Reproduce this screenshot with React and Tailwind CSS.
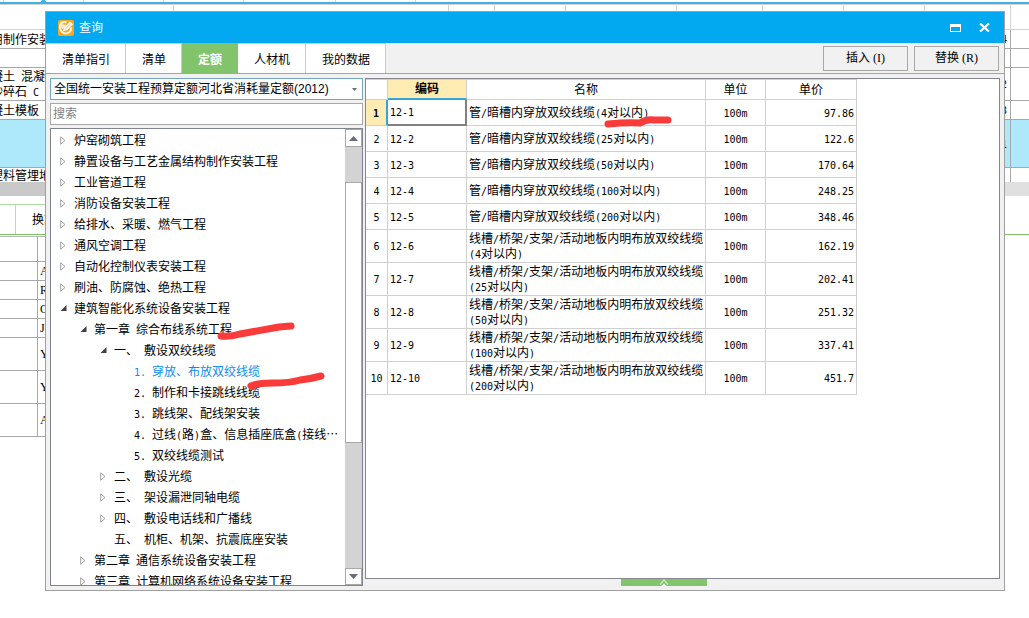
import { useState } from 'react'

const tabs = ['清单指引', '清单', '定额', '人材机', '我的数据']

const tree = [
  { level: 0, label: '炉窑砌筑工程' },
  { level: 0, label: '静置设备与工艺金属结构制作安装工程' },
  { level: 0, label: '工业管道工程' },
  { level: 0, label: '消防设备安装工程' },
  { level: 0, label: '给排水、采暖、燃气工程' },
  { level: 0, label: '通风空调工程' },
  { level: 0, label: '自动化控制仪表安装工程' },
  { level: 0, label: '刷油、防腐蚀、绝热工程' },
  { level: 0, label: '建筑智能化系统设备安装工程', open: true },
  { level: 1, prefix: '第一章', label: '综合布线系统工程', open: true },
  { level: 2, prefix: '一、', label: '敷设双绞线缆', open: true },
  { level: 3, prefix: '1.', label: '穿放、布放双绞线缆', leaf: true },
  { level: 3, prefix: '2.', label: '制作和卡接跳线线缆', leaf: true },
  { level: 3, prefix: '3.', label: '跳线架、配线架安装', leaf: true },
  { level: 3, prefix: '4.', label: '过线(路)盒、信息插座底盒(接线⋯', leaf: true },
  { level: 3, prefix: '5.', label: '双绞线缆测试', leaf: true },
  { level: 2, prefix: '二、', label: '敷设光缆' },
  { level: 2, prefix: '三、', label: '架设漏泄同轴电缆' },
  { level: 2, prefix: '四、', label: '敷设电话线和广播线' },
  { level: 2, prefix: '五、', label: '机柜、机架、抗震底座安装', leaf: true },
  { level: 1, prefix: '第二章', label: '通信系统设备安装工程' },
  { level: 1, prefix: '第三章', label: '计算机网络系统设备安装工程' },
]

const indents = ['pl-[9px]', 'pl-[29px]', 'pl-[49px]', 'pl-[69px]']

const pipe = '管/暗槽内穿放双绞线缆'
const tray = '线槽/桥架/支架/活动地板内明布放双绞线缆'

const quotas = [
  { code: '12-1', name: pipe, size: '(4对以内)', unit: '100m', price: '97.86' },
  { code: '12-2', name: pipe, size: '(25对以内)', unit: '100m', price: '122.6' },
  { code: '12-3', name: pipe, size: '(50对以内)', unit: '100m', price: '170.64' },
  { code: '12-4', name: pipe, size: '(100对以内)', unit: '100m', price: '248.25' },
  { code: '12-5', name: pipe, size: '(200对以内)', unit: '100m', price: '348.46' },
  { code: '12-6', name: tray, size: '(4对以内)', unit: '100m', price: '162.19', wrap: true },
  { code: '12-7', name: tray, size: '(25对以内)', unit: '100m', price: '202.41', wrap: true },
  { code: '12-8', name: tray, size: '(50对以内)', unit: '100m', price: '251.32', wrap: true },
  { code: '12-9', name: tray, size: '(100对以内)', unit: '100m', price: '337.41', wrap: true },
  { code: '12-10', name: tray, size: '(200对以内)', unit: '100m', price: '451.7', wrap: true },
]

const sheetRows = [
  { height: 'h-[19px]', lines: ['用制作安装'], value: '4' },
  { height: 'h-[19px]', lines: [], value: '' },
  { height: 'h-[33px]', lines: ['凝土 混凝', '砂碎石 C'], value: '2' },
  { height: 'h-[19px]', lines: ['凝土模板'], value: '3' },
  { height: 'h-[48px]', lines: [], value: '1', selected: true },
  { height: 'h-[14px]', lines: ['塑料管埋地'], value: '', last: true },
]

const detailRows = [
  { height: 'h-[25px]', type: '' },
  { height: 'h-[19px]', type: 'A' },
  { height: 'h-[19px]', type: 'R' },
  { height: 'h-[19px]', type: 'C' },
  { height: 'h-[19px]', type: 'J' },
  { height: 'h-[33px]', type: 'Y' },
  { height: 'h-[33px]', type: 'Y' },
  { height: 'h-[33px]', type: 'A' },
]

const headColumns = ['w-[174px]', 'w-[275px]', 'w-[46px]', 'w-[71px]', 'w-[111px]', 'w-[86px]', 'w-[81px]', 'w-[81px]', 'w-[86px]']
const stripColumns = ['w-1', 'w-20', 'w-20', 'w-20', 'w-[92px]', 'w-20']

const mono = "font-['DejaVu_Sans_Mono',monospace] text-[10px]"

// Latin runs take half the width of a Chinese character
function Mixed({ text }) {
  return text.split(/([\x20-\x7e]+)/).map((part, i) =>
    i % 2 ? (
      <span key={i} className={mono}>{part}</span>
    ) : (
      part
    )
  )
}

function Sheet() {
  return (
    <div className="overflow-hidden">
      <div className="relative flex h-1 border-b-2 border-[#41b1e1]">
        {stripColumns.map((width, i) => (
          <div key={i} className={`${width} shrink-0 border-r border-[#d3d3d3]`} />
        ))}
        <svg className="absolute left-10 top-0" width="7" height="3" viewBox="0 0 7 3">
          <path d="M0 3 L2 0 H5 L7 3 Z" fill="#41b1e1" />
        </svg>
      </div>
      <div className="flex h-[26px] border-y border-[#d3d3d3]">
        {headColumns.map((width, i) => (
          <div key={i} className={`${width} shrink-0 border-r border-[#d3d3d3]`} />
        ))}
      </div>
      {sheetRows.map((row, i) => (
        <div
          key={i}
          className={`${row.height} flex overflow-hidden ${row.last ? '' : 'border-b border-[#a8a8a8]'} ${row.selected ? 'bg-[#aee9fb]' : ''}`}
        >
          <div className="flex w-[1011px] shrink-0 items-center justify-between border-r border-[#a8a8a8] pr-[3px] pt-0.5">
            <div className="-ml-[9px] leading-[14px]">
              {row.lines.map((line) => (
                <p key={line}>
                  <Mixed text={line} />
                </p>
              ))}
            </div>
            <span className={mono}>{row.value}</span>
          </div>
        </div>
      ))}
      <div className="flex h-[14px] bg-[#c9c9c9]">
        <div className="ml-auto w-[100px] bg-[#e0e0e0]" />
      </div>
    </div>
  )
}

function Details() {
  return (
    <div className="mt-2">
      <div className="flex h-[31px] border-b border-[#7dc465]">
        <div className="w-4 border-r border-t border-[#b0e29e]" />
        <div className="flex w-[100px] items-center border-t border-[#b0e29e] pl-4">换算信息</div>
      </div>
      <div className="mt-px w-[500px] border-t border-[#b8b8b8]">
        {detailRows.map((row, i) => (
          <div key={i} className={`${row.height} flex border-b border-[#a8a8a8]`}>
            <div className="w-[38px] border-r border-[#a8a8a8]" />
            <span className="self-center pl-0.5 font-['Liberation_Serif',serif] leading-none">{row.type}</span>
          </div>
        ))}
      </div>
    </div>
  )
}

function TitleBar() {
  return (
    <header className="flex h-[31px] shrink-0 items-center bg-[#02a9f1] pl-3 pr-3.5 text-white">
      <svg width="16" height="16" viewBox="0 0 16 16">
        <rect width="16" height="16" rx="2" fill="#f9a61f" />
        <path d="M8.500 2.300 Q4 1 2.200 4.500 Q1 9 4 12 Q8 15 11.500 12 Q13.500 10 12.800 7.500" fill="none" stroke="#fff6e6" strokeWidth="2" />
        <path d="M2.500 4 L8.500 5 L5 9 Q3 9 2.500 4 Z" fill="#ffeccb" />
        <path d="M5 11.200 L6 7.500 L12 1.500 L15 4.200 L9 10.200 Z" fill="#fff" />
        <path d="M6.800 9.500 L12.500 3.800" stroke="#f6a936" strokeWidth="0.800" />
      </svg>
      <h1 className="ml-[5px]">查询</h1>
      <button type="button" aria-label="最大化" className="ml-auto">
        <svg width="11" height="8" viewBox="0 0 11 8">
          <path d="M0 0 H11 V8 H0 Z M1 3 V7 H10 V3 Z" fill="#fff" fillRule="evenodd" />
        </svg>
      </button>
      <button type="button" aria-label="关闭" className="ml-[18px]">
        <svg width="11" height="9" viewBox="0 0 11 9">
          <path d="M1 0.500 L10 8.500 M10 0.500 L1 8.500" stroke="#fff" strokeWidth="2.200" />
        </svg>
      </button>
    </header>
  )
}

function TreeArrow({ open, leaf }) {
  if (leaf) return <span className="w-2 shrink-0" />
  return (
    <svg className="shrink-0" width="8" height="9" viewBox="0 0 8 9">
      {open ? (
        <path d="M6.500 1 V7 H0.500 Z" fill="#404040" />
      ) : (
        <path d="M0.700 0.800 L5 4.500 L0.700 8.200 Z" fill="#fff" stroke="#a0a0a0" />
      )}
    </svg>
  )
}

function Tree({ selected, onSelect }) {
  return (
    <div className="flex min-h-0 flex-1 border border-[#7f848f] bg-white">
      <ul className="min-w-0 flex-1 overflow-hidden pt-px">
        {tree.map((node) => (
          <li key={node.label} className={indents[node.level]}>
            <button
              type="button"
              onClick={() => onSelect(node.label)}
              className={`flex h-[21px] items-center whitespace-nowrap ${node.label === selected ? 'text-[#0a8cf5]' : ''}`}
            >
              <TreeArrow open={node.open} leaf={node.leaf} />
              <span className="ml-1.5 flex items-center gap-1.5">
                {node.prefix && (
                  <span>
                    <Mixed text={node.prefix} />
                  </span>
                )}
                <span>
                  <Mixed text={node.label} />
                </span>
              </span>
            </button>
          </li>
        ))}
      </ul>
      <div className="flex w-[17px] shrink-0 flex-col bg-[#d3d3d3]">
        <button type="button" aria-label="向上滚动" className="flex h-[18px] items-center justify-center border border-[#a8a8a8] bg-white">
          <svg width="9" height="5" viewBox="0 0 9 5">
            <path d="M0 5 L4.500 0 L9 5 Z" fill="#686c7c" />
          </svg>
        </button>
        <div className="flex flex-1 flex-col">
          <div className="h-[35px]" />
          <div className="h-[62%] border border-[#a8a8a8] bg-white" />
        </div>
        <button type="button" aria-label="向下滚动" className="flex h-[17px] items-center justify-center border border-[#a8a8a8] bg-white">
          <svg width="9" height="5" viewBox="0 0 9 5">
            <path d="M0 0 L4.500 5 L9 0 Z" fill="#686c7c" />
          </svg>
        </button>
      </div>
    </div>
  )
}

function QuotaTable() {
  const cell = 'border-b border-r border-[#d0d0d0] p-0'

  return (
    <table className="w-[491px] table-fixed border-separate border-spacing-0 leading-[14px]">
      <colgroup>
        <col className="w-[22px]" />
        <col className="w-[79px]" />
        <col className="w-[239px]" />
        <col className="w-[60px]" />
        <col className="w-[91px]" />
      </colgroup>
      <thead>
        <tr className="h-[21px]">
          <th className={`${cell} border-t`} aria-label="序号" />
          <th className="border-b-2 border-r border-t border-[#d0d0d0] border-b-[#36a5d3] bg-[#ffecb3] p-0 font-bold">编码</th>
          <th className={`${cell} border-t font-normal`}>名称</th>
          <th className={`${cell} border-t font-normal`}>单位</th>
          <th className={`${cell} border-t font-normal`}>单价</th>
        </tr>
      </thead>
      <tbody>
        {quotas.map((row, i) => (
          <tr key={row.code} className={row.wrap ? 'h-[33px]' : 'h-[26px]'}>
            {i === 0 ? (
              <td className={`${mono} border-b border-r-2 border-[#d0d0d0] border-r-[#36a5d3] bg-[#ffecb3] pt-0.5 text-center font-bold`}>1</td>
            ) : (
              <td className={`${mono} border-b border-r border-[#d0d0d0] pt-0.5 text-center`}>{i + 1}</td>
            )}
            <td className={`${mono} pl-0.5 pt-0.5 ${i === 0 ? 'border-b-2 border-r-2 border-[#808080]' : 'border-b border-r border-[#d0d0d0]'}`}>
              {row.code}
            </td>
            <td className="whitespace-nowrap border-b border-r border-[#d0d0d0] pl-0.5 pt-0.5">
              <Mixed text={row.name} />
              {row.wrap && <br />}
              <Mixed text={row.size} />
            </td>
            <td className={`${mono} border-b border-r border-[#d0d0d0] pt-0.5 text-center`}>{row.unit}</td>
            <td className={`${mono} border-b border-r border-[#d0d0d0] pr-0.5 pt-0.5 text-right`}>{row.price}</td>
          </tr>
        ))}
      </tbody>
    </table>
  )
}

function QueryWindow() {
  const [tab, setTab] = useState('定额')
  const [node, setNode] = useState('穿放、布放双绞线缆')

  return (
    <section className="absolute bottom-[27px] left-[45px] right-6 top-[11px] flex flex-col border border-[#a0a0a0] bg-[#f1f1f1]">
      <TitleBar />
      <div className="flex h-[31px] shrink-0 items-center border-b border-[#7dc465] pr-[5px]">
        <nav className="flex h-full">
          {tabs.map((name) => (
            <button
              key={name}
              type="button"
              onClick={() => setTab(name)}
              className={`border-r border-t pl-4 pr-[15px] pt-0.5 ${
                name === tab ? 'border-[#82c46c] bg-[#82c46c] font-bold text-white' : 'border-[#b0e29e] bg-white'
              }`}
            >
              {name}
            </button>
          ))}
        </nav>
        <div className="ml-auto flex gap-1.5 font-['Liberation_Serif','Noto_Sans_CJK_SC',serif]">
          <button type="button" className="h-[25px] w-[85px] border border-[#a8a8a8]">插入 (I)</button>
          <button type="button" className="h-[25px] w-[85px] border border-[#a8a8a8]">替换 (R)</button>
        </div>
      </div>

      <div className="flex min-h-0 flex-1 gap-0.5 px-1 pb-1 pt-1">
        <aside className="flex w-[313px] shrink-0 flex-col gap-[3px]">
          <div className="relative">
            <select
              aria-label="定额库"
              className="block h-[22px] w-full appearance-none border border-[#76a8bd] bg-white pl-[3px] outline-none"
            >
              <option>全国统一安装工程预算定额河北省消耗量定额(2012)</option>
            </select>
            <svg className="pointer-events-none absolute right-1.5 top-2.5" width="5" height="3" viewBox="0 0 5 3">
              <path d="M0 0 H5 L2.500 3 Z" fill="#686c7c" />
            </svg>
          </div>
          <input
            type="text"
            aria-label="搜索"
            placeholder="搜索"
            className="h-[22px] w-full border border-[#a8a8a8] bg-white pl-0.5 outline-none placeholder:text-[#808080]"
          />
          <Tree selected={node} onSelect={setNode} />
        </aside>
        <div className="flex min-w-0 flex-1 flex-col">
          <div className="min-h-0 flex-1 border border-[#868690] bg-white">
            <QuotaTable />
          </div>
          <button type="button" aria-label="展开" className="ml-64 flex h-[7px] w-[86px] justify-center bg-[#82c46c]">
            <svg width="10" height="7" viewBox="0 0 10 7">
              <path d="M1 5.500 L5 1 L9 5.500" fill="none" stroke="#c5e6b9" strokeWidth="1.500" />
              <path d="M2.500 7 L5 4.500 L7.500 7 Z" fill="#fff" />
            </svg>
          </button>
        </div>
      </div>
    </section>
  )
}

function MarkerStrokes() {
  return (
    <svg
      className="pointer-events-none absolute left-0 top-0"
      width="1029"
      height="618"
      viewBox="0 0 1029 618"
      fill="none"
      stroke="#fb3a3a"
      strokeWidth="7"
      strokeLinecap="round"
      strokeLinejoin="round"
    >
      <path d="M221 336 Q231 337 240 334 Q262 330 279 327 L291 326" />
      <path d="M251 386 Q257 383 272 383 Q290 383 300 380 Q310 379 321 376" />
      <path d="M608 124 Q628 122 640 123 Q646 119 654 120 H668" />
    </svg>
  )
}

export default function App() {
  return (
    <main className="relative min-h-screen overflow-hidden bg-white font-['Liberation_Sans','Noto_Sans_CJK_SC',sans-serif] text-xs text-black">
      <Sheet />
      <Details />
      <QueryWindow />
      <MarkerStrokes />
    </main>
  )
}
